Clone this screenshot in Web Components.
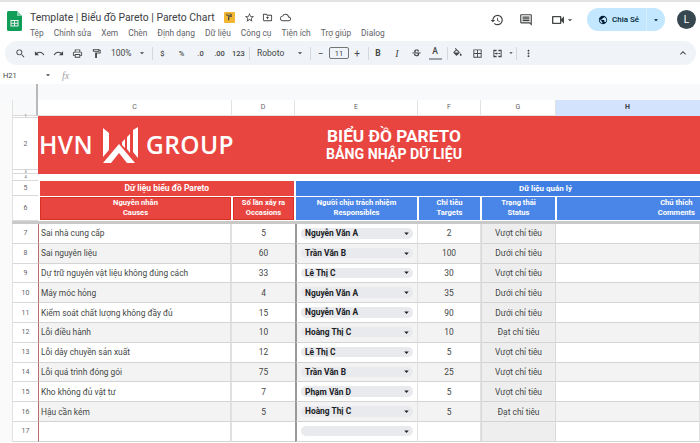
<!DOCTYPE html>
<html lang="vi">
<head>
<meta charset="utf-8">
<title>Template | Biểu đồ Pareto | Pareto Chart</title>
<style>
  html, body { margin: 0; padding: 0; background: #fff; }
  body { width: 700px; height: 443px; overflow: hidden; font-family: Roboto, "Noto Sans", sans-serif; color: #444746; }
</style>
</head>
<body>
<sheets-app></sheets-app>

<script>
// material style icon paths, all 24x24
const ICONS = {
  search: 'M15.5 14h-.79l-.28-.27A6.47 6.47 0 0 0 16 9.5 6.5 6.5 0 1 0 9.5 16c1.61 0 3.09-.59 4.23-1.57l.27.28v.79l5 4.99L20.49 19l-4.99-5zm-6 0C7.01 14 5 11.99 5 9.5S7.01 5 9.5 5 14 7.01 14 9.5 11.99 14 9.5 14z',
  undo: 'M12.5 8c-2.65 0-5.05.99-6.9 2.6L2 7v9h9l-3.62-3.62c1.39-1.16 3.16-1.88 5.12-1.88 3.54 0 6.55 2.31 7.6 5.5l2.37-.78C21.08 11.03 17.15 8 12.5 8z',
  redo: 'M18.4 10.6C16.55 8.99 14.15 8 11.5 8c-4.65 0-8.58 3.03-9.96 7.22L3.9 16c1.05-3.19 4.05-5.5 7.6-5.5 1.95 0 3.73.72 5.12 1.88L13 16h9V7l-3.6 3.6z',
  print: 'M19 8h-1V3H6v5H5c-1.66 0-3 1.34-3 3v6h4v4h12v-4h4v-6c0-1.66-1.34-3-3-3zM8 5h8v3H8V5zm8 12v2H8v-4h8v2zm2-2v-2H6v2H4v-4c0-.55.45-1 1-1h14c.55 0 1 .45 1 1v4h-2z',
  paint: 'M18 4V3c0-.55-.45-1-1-1H5c-.55 0-1 .45-1 1v4c0 .55.45 1 1 1h12c.55 0 1-.45 1-1V6h1v4H9v11c0 .55.45 1 1 1h2c.55 0 1-.45 1-1v-9h8V4h-3zm-2 2H6V4h10v2z',
  star: 'M22 9.24l-7.19-.62L12 2 9.19 8.63 2 9.24l5.46 4.73L5.82 21 12 17.27 18.18 21l-1.63-7.03L22 9.24zM12 15.4l-3.76 2.27 1-4.28-3.32-2.88 4.38-.38L12 6.1l1.71 4.04 4.38.38-3.32 2.88 1 4.28L12 15.4z',
  folder: 'M20 6h-8l-2-2H4c-1.1 0-2 .9-2 2v12c0 1.1.9 2 2 2h16c1.1 0 2-.9 2-2V8c0-1.1-.9-2-2-2zm0 12H4V6h5.17l2 2H20v10zM12 9.5l-3.5 3.5H11v3h2v-3h2.5z',
  cloud: 'M19.35 10.04A7.49 7.49 0 0 0 12 4C9.11 4 6.6 5.64 5.35 8.04A5.994 5.994 0 0 0 0 14c0 3.31 2.69 6 6 6h13c2.76 0 5-2.24 5-5 0-2.64-2.05-4.78-4.65-4.96zM19 18H6c-2.21 0-4-1.79-4-4 0-2.05 1.53-3.76 3.56-3.97l1.07-.11.5-.95A5.469 5.469 0 0 1 12 6c2.62 0 4.88 1.86 5.39 4.43l.3 1.5 1.53.11A2.98 2.98 0 0 1 22 15c0 1.65-1.35 3-3 3z',
  history: 'M13 3a9 9 0 0 0-9 9H1l3.89 3.89.07.14L9 12H6c0-3.87 3.13-7 7-7s7 3.13 7 7-3.13 7-7 7c-1.93 0-3.68-.79-4.94-2.06l-1.42 1.42A8.954 8.954 0 0 0 13 21a9 9 0 0 0 0-18zm-1 5v5l4.28 2.54.72-1.21-3.5-2.08V8H12z',
  comment: 'M20 2H4c-1.1 0-2 .9-2 2v12c0 1.1.9 2 2 2h14l4 4V4c0-1.1-.9-2-2-2zm0 15.17L18.83 16H4V4h16v13.17zM6 12h12v2H6zm0-3h12v2H6zm0-3h12v2H6z',
  video: 'M15 8v8H5V8h10m1-2H4c-.55 0-1 .45-1 1v10c0 .55.45 1 1 1h12c.55 0 1-.45 1-1v-3.5l4 4v-11l-4 4V7c0-.55-.45-1-1-1z',
  globe: 'M12 2C6.48 2 2 6.48 2 12s4.48 10 10 10 10-4.48 10-10S17.52 2 12 2zm-1 17.93c-3.95-.49-7-3.85-7-7.93 0-.62.08-1.21.21-1.79L9 15v1c0 1.1.9 2 2 2v1.93zm6.9-2.54c-.26-.81-1-1.39-1.9-1.39h-1v-3c0-.55-.45-1-1-1H8v-2h2c.55 0 1-.45 1-1V7h2c1.1 0 2-.9 2-2v-.41c2.93 1.19 5 4.06 5 7.41 0 2.08-.8 3.97-2.1 5.39z',
  strike: 'M7.24 8.75c-.26-.48-.39-1.03-.39-1.67 0-.61.13-1.16.4-1.67.26-.5.63-.93 1.11-1.29a5.73 5.73 0 0 1 1.7-.83c.66-.19 1.39-.29 2.18-.29.81 0 1.54.11 2.21.34.66.22 1.23.54 1.69.94.47.4.83.88 1.08 1.43s.38 1.15.38 1.81h-3.01c0-.31-.05-.59-.15-.85-.09-.27-.24-.49-.44-.68-.2-.19-.45-.33-.75-.44-.3-.1-.66-.16-1.06-.16-.39 0-.74.04-1.03.13s-.53.21-.72.36c-.19.16-.34.34-.44.55-.1.21-.15.43-.15.66 0 .48.25.88.74 1.21.38.25.77.48 1.41.7H7.39c-.05-.08-.11-.17-.15-.25zM21 12v-2H3v2h9.62c.18.07.4.14.55.2.37.17.66.34.87.51s.35.36.43.57c.07.2.11.43.11.69 0 .23-.05.45-.14.66-.09.2-.23.38-.42.53-.19.15-.42.26-.71.35-.29.08-.63.13-1.01.13-.43 0-.83-.04-1.18-.13s-.66-.23-.91-.42c-.25-.19-.45-.44-.59-.75s-.25-.76-.25-1.21H6.4c0 .55.08 1.13.24 1.58s.37.85.65 1.21c.28.35.6.66.98.92.37.26.78.48 1.22.65.44.17.9.3 1.38.39.48.08.96.13 1.44.13.8 0 1.53-.09 2.18-.28s1.21-.45 1.67-.79c.46-.34.82-.77 1.07-1.27s.38-1.07.38-1.71c0-.6-.1-1.14-.31-1.61-.05-.11-.11-.23-.17-.33H21z',
  fill: 'M16.56 8.94 7.62 0 6.21 1.41l2.38 2.38-5.15 5.15a1.49 1.49 0 0 0 0 2.12l5.5 5.5c.29.29.68.44 1.06.44s.77-.15 1.06-.44l5.5-5.5c.59-.58.59-1.53 0-2.12zM5.21 10 10 5.21 14.79 10H5.21zM19 11.5s-2 2.17-2 3.5c0 1.1.9 2 2 2s2-.9 2-2c0-1.33-2-3.5-2-3.5z',
  borders: 'M3 3v18h18V3H3zm8 16H5v-6h6v6zm0-8H5V5h6v6zm8 8h-6v-6h6v6zm0-8h-6V5h6v6z',
  merge: 'M3 4h7v3H5v10h5v3H3zm11 0h7v16h-7v-3h5V7h-5zM6 11h4V9l3 3-3 3v-2H6zm12 0h-4v2h4z',
  more: 'M12 8c1.1 0 2-.9 2-2s-.9-2-2-2-2 .9-2 2 .9 2 2 2zm0 2c-1.1 0-2 .9-2 2s.9 2 2 2 2-.9 2-2-.9-2-2-2zm0 6c-1.1 0-2 .9-2 2s.9 2 2 2 2-.9 2-2-.9-2-2-2z',
  up: 'M7.41 15.41 12 10.83l4.59 4.58L18 14l-6-6-6 6z',
  caret: 'M7 10l5 5 5-5z'
};

class GsIcon extends HTMLElement {
  connectedCallback() {
    const size = this.getAttribute('size') || 12;
    const root = this.shadowRoot || this.attachShadow({ mode: 'open' });
    root.innerHTML = `
      <style>
        :host { display: inline-flex; align-items: center; justify-content: center; flex: none; }
        svg { display: block; fill: currentColor; }
      </style>
      <svg width="${size}" height="${size}" viewBox="0 0 24 24"><path d="${ICONS[this.getAttribute('name')]}"/></svg>`;
  }
}

class TitleBar extends HTMLElement {
  constructor() {
    super();
    this.attachShadow({ mode: 'open' });
    const menus = ['Tệp', 'Chỉnh sửa', 'Xem', 'Chèn', 'Định dạng', 'Dữ liệu', 'Công cụ', 'Tiện ích', 'Trợ giúp', 'Dialog'];
    this.shadowRoot.innerHTML = `
      <style>
        :host { display: flex; height: 39px; padding: 0 0 0 7px; background: #fff; border-top: 2px solid #e3e3e3; align-items: flex-start; }
        .logo { margin-top: 9px; width: 15px; height: 20px; flex: none; }
        .info { margin-left: 8px; flex: none; width: 450px; }
        .name { display: flex; align-items: center; margin-top: 7px; height: 16px; font-size: 10.4px; color: #3c4043; white-space: nowrap; }
        .badge { width: 11px; height: 11px; margin-left: 9px; background: #f2b632; border-radius: 1px; display: flex; align-items: center; justify-content: center; color: #5f4a12; }
        .name gs-icon { color: #444746; }
        .star { margin-left: 9px; }
        .folder { margin-left: 7px; }
        .cloud { margin-left: 7px; }
        nav { display: flex; margin-top: 3px; font-size: 8.4px; color: #5f6368; white-space: nowrap; }
        nav span { margin-right: 10px; }
        .right { display: flex; align-items: center; margin-top: 6px; flex: none; color: #444746; }
        .history { margin-left: 10px; }
        .comment { margin-left: 15px; }
        .video { margin-left: 17px; }
        .vcaret { margin-left: -1px; }
        .share { display: flex; align-items: center; height: 23px; width: 78px; margin-left: 12px; border-radius: 12px; background: #c2e7ff; color: #001d35; font-size: 8px; font-weight: 500; overflow: hidden; }
        .share .main { display: flex; align-items: center; gap: 4px; width: 59px; padding-left: 11px; box-sizing: border-box; height: 100%; }
        .share .drop { flex: 1; height: 100%; border-left: 1px solid #d6eefc; display: flex; align-items: center; justify-content: center; }
        .avatar { width: 19px; height: 19px; margin-left: 12px; border-radius: 50%; background: #37474f; color: #fff; font-size: 10px; display: flex; align-items: center; justify-content: center; }
      </style>
      <svg class="logo" viewBox="0 0 15 20">
        <path d="M1.5 0H10l5 5v13.5a1.5 1.5 0 0 1-1.5 1.5h-12A1.5 1.5 0 0 1 0 18.5v-17A1.5 1.5 0 0 1 1.5 0z" fill="#0f9d58"/>
        <path d="M10 0l5 5h-5z" fill="#87ceac"/>
        <path d="M3.5 9h8v6.5h-8zm1 1v1.7h2.5V10zm3.5 0v1.7h2.5V10zm-3.5 2.7v1.8h2.5v-1.8zm3.5 0v1.8h2.5v-1.8z" fill="#f1f1f1" fill-rule="evenodd"/>
      </svg>
      <div class="info">
        <div class="name">
          <span>Template | Biểu đồ Pareto | Pareto Chart</span>
          <span class="badge"><gs-icon name="paint" size="8"></gs-icon></span>
          <gs-icon class="star" name="star" size="11"></gs-icon>
          <gs-icon class="folder" name="folder" size="11"></gs-icon>
          <gs-icon class="cloud" name="cloud" size="11"></gs-icon>
        </div>
        <nav>${menus.map(m => `<span>${m}</span>`).join('')}</nav>
      </div>
      <div class="right">
        <gs-icon class="history" name="history" size="14"></gs-icon>
        <gs-icon class="comment" name="comment" size="14"></gs-icon>
        <gs-icon class="video" name="video" size="16"></gs-icon>
        <gs-icon class="vcaret" name="caret" size="10"></gs-icon>
        <div class="share">
          <div class="main"><gs-icon name="globe" size="10"></gs-icon><span>Chia Sẻ</span></div>
          <div class="drop"><gs-icon name="caret" size="10"></gs-icon></div>
        </div>
        <div class="avatar">L</div>
      </div>`;
  }
}

class ToolBar extends HTMLElement {
  constructor() {
    super();
    this.attachShadow({ mode: 'open' });
    const btn = (name, size = 11, style = '') => `<span class="b" style="${style}"><gs-icon name="${name}" size="${size}"></gs-icon></span>`;
    const txt = (t, cls = '') => `<span class="b t ${cls}">${t}</span>`;
    this.shadowRoot.innerHTML = `
      <style>
        :host { display: flex; align-items: center; height: 24px; margin: 0 4px 0 5px; padding-left: 5.5px; background: #f0f4f9; border-radius: 12px; color: #444746; font-size: 8.5px; white-space: nowrap; }
        .b { display: inline-flex; width: 19px; height: 18px; flex: none; align-items: center; justify-content: center; }
        .t { font-size: 7.5px; font-weight: 500; }
        .sep { width: 1px; height: 13px; background: #d5d8dc; flex: none; }
        .zoom { margin-left: 5.5px; width: 26px; font-size: 8.5px; }
        .font { width: 33px; margin-left: 7px; font-size: 8.5px; }
        .size { width: 20px; height: 12px; box-sizing: border-box; border: 1px solid #747775; border-radius: 2px; margin: 0 -1.5px 0 -1px; display: flex; align-items: center; justify-content: center; font-size: 7.5px; flex: none; }
        .pm { font-size: 10px; font-weight: 400; }
        .bold { font-weight: 700; font-size: 8.5px; }
        .ital { font-style: italic; font-family: "Liberation Serif", serif; font-size: 10px; }
        .color { font-size: 8.5px; border-bottom: 2px solid #9aa0a6; height: 12px; width: 13px; margin: 0 3px; line-height: 11px; }
        .push { flex: 1; }
      </style>
      ${btn('search')}${btn('undo')}${btn('redo')}${btn('print')}${btn('paint')}
      <span class="zoom">100%</span><gs-icon name="caret" size="10"></gs-icon>
      <span class="sep" style="margin:0 0 0 5px"></span>
      ${txt('$')}${txt('%')}${txt('.0')}${txt('.00')}${txt('123')}
      <span class="sep" style="margin-left:1px"></span>
      <span class="font">Roboto</span><gs-icon name="caret" size="10" style="margin-left:5px"></gs-icon>
      <span class="sep" style="margin-left:5px"></span>
      ${txt('−', 'pm')}<span class="size">11</span>${txt('+', 'pm')}
      <span class="sep" style="margin-left:1px"></span>
      ${txt('B', 'bold')}${txt('I', 'ital')}${btn('strike')}
      <span class="b t color" style="display:inline-block;text-align:center">A</span>
      <span class="sep" style="margin-left:2px"></span>
      ${btn('fill')}${btn('borders', 11, 'margin-left:1px')}${btn('merge', 11, 'margin-left:1px')}<gs-icon name="caret" size="8"></gs-icon>
      <span class="sep" style="margin-left:1px"></span>
      ${btn('more', 11, 'margin-left:2px')}
      <span class="push"></span>
      <span class="b" style="margin-right:4px"><gs-icon name="up" size="12"></gs-icon></span>`;
  }
}

class FormulaBar extends HTMLElement {
  constructor() {
    super();
    this.attachShadow({ mode: 'open' });
    this.shadowRoot.innerHTML = `
      <style>
        :host { display: flex; align-items: center; height: 18px; padding-top: 1px; font-size: 7.5px; background: #fff; color: #444746; border-bottom: 1px solid #d9d9d9; box-sizing: content-box; margin-bottom: -1px; }
        .ref { width: 40px; padding-left: 3px; }
        .fx { margin-left: 9px; font-style: italic; font-family: "Liberation Serif", serif; font-size: 10px; color: #a0a4a8; }
      </style>
      <span class="ref">H21</span>
      <gs-icon name="caret" size="10"></gs-icon>
      <span class="fx">fx</span>`;
  }
}

class NameDrop extends HTMLElement {
  constructor() {
    super();
    this.attachShadow({ mode: 'open' });
    this.shadowRoot.innerHTML = `
      <style>
        :host { display: flex; align-items: center; height: 10.5px; margin: 0 4px 0 4px; padding: 0 1px 0 4px; border-radius: 5px; background: #e8eaed; font-size: 8.4px; font-weight: 700; color: #202124; justify-content: space-between; }
        span { line-height: 10px; }
      </style>
      <span><slot></slot></span><gs-icon name="caret" size="11"></gs-icon>`;
  }
}

const COLS = ['C', 'D', 'E', 'F', 'G', 'H'];
const ROWS = [
  [7, 'Sai nhà cung cấp', 5, 'Nguyễn Văn A', 2, 'Vượt chỉ tiêu'],
  [8, 'Sai nguyên liệu', 60, 'Trần Văn B', 100, 'Dưới chỉ tiêu'],
  [9, 'Dự trữ nguyên vật liệu không đúng cách', 33, 'Lê Thị C', 30, 'Vượt chỉ tiêu'],
  [10, 'Máy móc hỏng', 4, 'Nguyễn Văn A', 35, 'Dưới chỉ tiêu'],
  [11, 'Kiểm soát chất lượng không đầy đủ', 15, 'Nguyễn Văn A', 90, 'Dưới chỉ tiêu'],
  [12, 'Lỗi điều hành', 10, 'Hoàng Thị C', 10, 'Đạt chỉ tiêu'],
  [13, 'Lỗi dây chuyền sản xuất', 12, 'Lê Thị C', 5, 'Vượt chỉ tiêu'],
  [14, 'Lỗi quá trình đóng gói', 75, 'Trần Văn B', 25, 'Vượt chỉ tiêu'],
  [15, 'Kho không đủ vật tư', 7, 'Phạm Văn D', 5, 'Vượt chỉ tiêu'],
  [16, 'Hậu cần kém', 5, 'Hoàng Thị C', 5, 'Đạt chỉ tiêu'],
  [17, '', '', '', '', '']
];

class ParetoSheet extends HTMLElement {
  constructor() {
    super();
    this.attachShadow({ mode: 'open' });
    this.shadowRoot.innerHTML = `
      <style>
        :host { display: grid; flex: 1; overflow: hidden; background: #fff;
          grid-template-columns: 12px 26px 194px 63px 123px 63px 75px 144px;
          grid-template-rows: 15.5px 2.5px 52px 4px 7px 14.5px 25.5px 3px repeat(11, 19.8px);
          font-size: 8.4px; color: #444746; }
        .corner { grid-column: 2; grid-row: 1; background: #f8f9fa; border-right: 2px solid #b9b9b9; border-left: 1px solid #e1e3e1; border-bottom: 1px solid #d9d9d9; box-sizing: border-box; }
        .gutter { grid-column: 1; grid-row: 1 / -1; background: #fafafa; }
        .ch { display: flex; align-items: center; justify-content: center; font-size: 7px; color: #5f6368; background: #fff; border-right: 1px solid #e1e3e1; border-bottom: 1px solid #e1e3e1; box-sizing: border-box; }
        .ch.sel { background: #d3e3fd; color: #3c4043; font-weight: 700; border-color: #d3e3fd; }
        .rh { grid-column: 2; display: flex; align-items: center; justify-content: center; font-size: 7px; color: #5f6368; background: #fff; border-left: 1px solid #e1e3e1; border-bottom: 1px solid #d9d9d9; box-sizing: border-box; }
        .rh.tiny { font-size: 4px; line-height: 2px; }
        .banner { grid-column: 3 / -1; grid-row: 2 / span 3; background: #e94540; color: #fff; display: flex; align-items: center; }
        .blank { grid-column: 3 / -1; grid-row: 5; background: #fff; }
        .band { background: #e94540; color: #fff; font-weight: 700; font-size: 8.5px; display: flex; align-items: center; justify-content: center; text-align: center; }
        .band.red { grid-column: 3 / span 2; grid-row: 6; margin-left: 1.5px; margin-right: 1px; }
        .band.blue { grid-column: 5 / -1; grid-row: 6; background: #3f7fe4; margin-left: 1px; padding-left: 95px; font-size: 8px; }
        .head { grid-row: 7; margin-top: 1px; margin-bottom: 1.5px; box-sizing: border-box; font-weight: 700; font-size: 7.6px; line-height: 10px; color: #fff; display: flex; align-items: center; justify-content: center; text-align: center; }
        .head.r { background: #e94540; border: 1px solid #d93025; }
        .head.b { background: #4a86e8; }
        .head.last { justify-content: flex-end; padding-right: 5px; white-space: nowrap; margin-left: 1px; }
        .freeze { grid-column: 3 / -1; grid-row: 8; background: #c9c9c9; }
        .c { display: flex; align-items: center; justify-content: center; box-sizing: border-box; border-bottom: 1px solid #d4d4d4; border-right: 1px solid #e1e1e1; white-space: nowrap; color: #444746; min-width: 0; }
        .c.alt { background: #f3f3f3; }
        .c.left { justify-content: flex-start; padding-left: 2px; border-left: 1px solid #b96a6a; border-right: 2px solid #e0e0e0; }
        .c.resp { display: block; padding-top: 4px; border-left: 2px solid #999; }
        .c.d { border-right: none; }
        .c.status { background: #eeeeee; border-left: 1px solid #d9d9d9; border-right: 1px solid #d9d9d9; }
        .logo { display: flex; align-items: center; height: 36px; width: 266px; flex: none; font-family: "Open Sans", sans-serif; font-weight: 600; font-size: 24.5px; letter-spacing: .4px; padding-left: 1px; }
        .logo svg { margin: 0 8px; flex: none; }
        .title { font-weight: 700; text-align: center; width: 144px; line-height: 18px; margin-left: 17px; white-space: nowrap; }
        .title div:first-child { font-size: 17.3px; }
        .title div:last-child { font-size: 14.2px; }
      </style>
      <div class="gutter"></div>
      <div class="corner"></div>
      ${COLS.map((c, i) => `<div class="ch ${c === 'H' ? 'sel' : ''}" style="grid-column:${i + 3};grid-row:1">${c}</div>`).join('')}
      ${[['1', 2, 1], ['2', 3], ['3', 4, 1], ['4', 5, 1], ['5', 6], ['6', 7]].map(([n, r, t]) => `<div class="rh ${t ? 'tiny' : ''}" style="grid-row:${r}">${n}</div>`).join('')}
      <div class="rh" style="grid-row:8;background:#c9c9c9;border:0"></div>
      <div class="banner">
        <div class="logo">
          <span>HVN</span>
          <svg width="37" height="36" viewBox="0 0 37 36" fill="#fff">
            <path d="M2 1l6 5v17l-6 7z"/>
            <path d="M18 17l16 19h-8l-8-10-8 10H2z"/>
            <path d="M21 15l3-3v9l-3-3zM26 10l3-3v19l-3-4zM32 3l5-3v31l-5-6z"/>
          </svg>
          <span>GROUP</span>
        </div>
        <div class="title"><div>BIỂU ĐỒ PARETO</div><div>BẢNG NHẬP DỮ LIỆU</div></div>
      </div>
      <div class="blank"></div>
      <div class="band red">Dữ liệu biểu đồ Pareto</div>
      <div class="band blue">Dữ liệu quản lý</div>
      <div class="head r" style="grid-column:3;margin-left:2px;margin-right:1px">Nguyên nhân<br>Causes</div>
      <div class="head r" style="grid-column:4;margin-left:1px;margin-right:1px">Số lần xảy ra<br>Occasions</div>
      <div class="head b" style="grid-column:5;margin-left:1px;margin-right:1px">Người chịu trách nhiệm<br>Responsibles</div>
      <div class="head b" style="grid-column:6;margin-left:1px;margin-right:1px">Chỉ tiêu<br>Targets</div>
      <div class="head b" style="grid-column:7;margin-left:1px;margin-right:1px">Trạng thái<br>Status</div>
      <div class="head b last" style="grid-column:8">Chú thích<br>Comments</div>
      <div class="freeze"></div>
      ${ROWS.map(([n, cause, count, who, target, status], i) => {
        const alt = n % 2 === 0 ? 'alt' : '';
        const r = i + 9;
        return `<div class="rh" style="grid-row:${r}">${n}</div>
          <div class="c left ${alt}" style="grid-row:${r};grid-column:3">${cause}</div>
          <div class="c d ${alt}" style="grid-row:${r};grid-column:4">${count}</div>
          <div class="c resp ${alt}" style="grid-row:${r};grid-column:5"><name-drop>${who}</name-drop></div>
          <div class="c ${alt}" style="grid-row:${r};grid-column:6">${target}</div>
          <div class="c status" style="grid-row:${r};grid-column:7">${status}</div>
          <div class="c ${alt}" style="grid-row:${r};grid-column:8"></div>`;
      }).join('')}`;
  }
}

class SheetsApp extends HTMLElement {
  constructor() {
    super();
    this.attachShadow({ mode: 'open' });
    this.shadowRoot.innerHTML = `
      <style>
        :host { display: flex; flex-direction: column; width: 700px; height: 443px; overflow: hidden; background: #fff; }
        .strip { height: 16px; flex: none; background: #f8f9fa; }
        .strip i { display: block; width: 2px; height: 100%; margin-left: 36px; background: #b9b9b9; }
      </style>
      <title-bar></title-bar>
      <tool-bar></tool-bar>
      <formula-bar></formula-bar>
      <div class="strip"><i></i></div>
      <pareto-sheet></pareto-sheet>`;
  }
}

customElements.define('gs-icon', GsIcon);
customElements.define('title-bar', TitleBar);
customElements.define('tool-bar', ToolBar);
customElements.define('formula-bar', FormulaBar);
customElements.define('name-drop', NameDrop);
customElements.define('pareto-sheet', ParetoSheet);
customElements.define('sheets-app', SheetsApp);
</script>
</body>
</html>
